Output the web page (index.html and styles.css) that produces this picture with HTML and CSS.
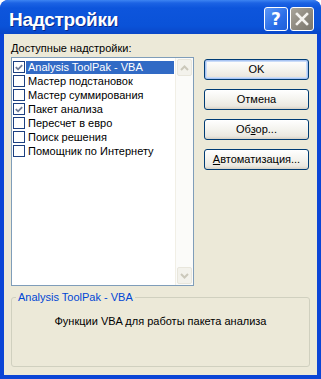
FILE: index.html
```html
<!DOCTYPE html>
<html lang="ru">
<head>
<meta charset="utf-8">
<title>Надстройки</title>
<link rel="stylesheet" href="styles.css">
</head>
<body>
<div class="window">
  <div class="titlebar">
    <span class="title">Надстройки</span>
    <div class="tb-buttons">
      <span class="tb-btn help">?</span>
      <span class="tb-btn close">
        <svg width="14" height="14" viewBox="0 0 14 14"><path d="M2 2 L12 12 M12 2 L2 12" stroke="#f4f2ee" stroke-width="2.6" stroke-linecap="square"/></svg>
      </span>
    </div>
  </div>
  <div class="content">
    <div class="label"><u>Д</u>оступные надстройки:</div>
    <div class="main">
      <div class="list">
        <ul class="items">
          <li class="item"><span class="cb"><svg width="11" height="11" viewBox="0 0 11 11"><path d="M2 5 L4.5 7.5 L9 3" fill="none" stroke="#6d7a96" stroke-width="2"/></svg></span><span class="txt sel">Analysis ToolPak - VBA</span></li>
          <li class="item"><span class="cb"></span><span class="txt">Мастер подстановок</span></li>
          <li class="item"><span class="cb"></span><span class="txt">Мастер суммирования</span></li>
          <li class="item"><span class="cb"><svg width="11" height="11" viewBox="0 0 11 11"><path d="M2 5 L4.5 7.5 L9 3" fill="none" stroke="#6d7a96" stroke-width="2"/></svg></span><span class="txt">Пакет анализа</span></li>
          <li class="item"><span class="cb"></span><span class="txt">Пересчет в евро</span></li>
          <li class="item"><span class="cb"></span><span class="txt">Поиск решения</span></li>
          <li class="item"><span class="cb"></span><span class="txt">Помощник по Интернету</span></li>
        </ul>
        <div class="scrollbar">
          <div class="arrow"><svg width="9" height="6" viewBox="0 0 9 6"><path d="M1 5 L4.5 1.5 L8 5" fill="none" stroke="#cbc8bb" stroke-width="2"/></svg></div>
          <div class="track"></div>
          <div class="arrow"><svg width="9" height="6" viewBox="0 0 9 6"><path d="M1 1 L4.5 4.5 L8 1" fill="none" stroke="#cbc8bb" stroke-width="2"/></svg></div>
        </div>
      </div>
      <div class="buttons">
        <button class="btn default">OK</button>
        <button class="btn">Отмена</button>
        <button class="btn">Об<u>з</u>ор...</button>
        <button class="btn"><u>А</u>втоматизация...</button>
      </div>
    </div>
    <fieldset class="group">
      <legend class="group-title">Analysis ToolPak - VBA</legend>
      <p class="desc">Функции VBA для работы пакета анализа</p>
    </fieldset>
  </div>
</div>
</body>
</html>
```

FILE: styles.css
```css
html, body {
  margin: 0;
  padding: 0;
  background: #ffffff;
}

.window {
  width: 321px;
  height: 379px;
  box-sizing: border-box;
  background: #0b45d6;
  border-radius: 8px 8px 0 0;
  display: flex;
  flex-direction: column;
  font-family: "Liberation Sans", Arial, sans-serif;
  font-size: 11px;
  color: #000;
  overflow: hidden;
}

.titlebar {
  height: 34px;
  flex: none;
  display: flex;
  justify-content: space-between;
  align-items: flex-start;
  padding: 0 7px 0 9px;
  background: linear-gradient(#3d84f2 0px, #1c63e4 3px, #0d55dc 8px, #0a52d8 26px, #0a47c8 34px);
  border-radius: 8px 8px 0 0;
}

.title {
  margin-top: 9px;
  font-size: 19px;
  line-height: 22px;
  font-weight: bold;
  color: #ffffff;
  letter-spacing: -0.3px;
  text-shadow: 1px 1px 0 #0a2a8c;
}

.tb-buttons {
  margin-top: 7px;
  display: flex;
  gap: 2px;
}

.tb-btn {
  width: 24px;
  height: 24px;
  box-sizing: border-box;
  border: 1px solid #ffffff;
  border-radius: 3px;
  display: flex;
  align-items: center;
  justify-content: center;
}

.help {
  background: linear-gradient(135deg, #5d98f7, #2a6ee8 60%, #1f5fd8);
  color: #ffffff;
  font-family: "DejaVu Sans", sans-serif;
  font-weight: bold;
  font-size: 17px;
  line-height: 1;
}

.close {
  background: linear-gradient(135deg, #aaa59a, #8b867c 60%, #7b776e);
}

.content {
  flex: 1;
  margin: 0 4px 4px;
  background: #ece9d8;
  display: flex;
  flex-direction: column;
  padding: 8px 8px 0 7px;
}

.label {
  line-height: 13px;
  height: 13px;
}

.main {
  display: flex;
  gap: 10px;
  margin-top: 2px;
}

.list {
  width: 183px;
  height: 229px;
  box-sizing: border-box;
  border: 1px solid #7f9db9;
  background: #ffffff;
  display: flex;
}

.items {
  flex: 1;
  list-style: none;
  margin: 0;
  padding: 2px 0 0;
}

.item {
  height: 14px;
  display: flex;
  align-items: center;
}

.cb {
  width: 12px;
  height: 12px;
  box-sizing: border-box;
  border: 1px solid #1c3f80;
  background: #ffffff;
  margin-left: 1px;
  margin-right: 1px;
  display: flex;
  align-items: center;
  justify-content: center;
}

.txt {
  flex: 1;
  height: 13px;
  line-height: 13px;
  padding-left: 2px;
  margin-right: 1px;
  white-space: nowrap;
}

.txt.sel {
  background: #316ac5;
  color: #ffffff;
}

.scrollbar {
  width: 17px;
  display: flex;
  flex-direction: column;
  background: #fbfbf9;
  border-left: 1px solid #f1efe6;
}

.arrow {
  height: 17px;
  margin: 1px;
  box-sizing: border-box;
  border: 1px solid #e8e6dc;
  border-radius: 2px;
  background: #f3f2ec;
  display: flex;
  align-items: center;
  justify-content: center;
}

.track {
  flex: 1;
}

.buttons {
  margin-top: 2px;
  width: 105px;
  display: flex;
  flex-direction: column;
  gap: 9px;
}

.btn {
  height: 21px;
  padding: 0;
  border: 1px solid #003c74;
  border-radius: 3px;
  background: linear-gradient(#ffffff, #f4f3ee 50%, #ebe8e0 85%, #d6d0c5);
  font-family: "Liberation Sans", Arial, sans-serif;
  font-size: 11px;
  color: #000;
  line-height: 19px;
}

.btn.default {
  box-shadow: inset 0 0 0 1px #a9c4f2, inset 0 0 0 2px #cadcf8;
}

.group {
  margin: 5px 0 0;
  width: 299px;
  height: 76px;
  box-sizing: border-box;
  border: 1px solid #d0d0bf;
  border-radius: 3px;
  padding: 0;
}

.group-title {
  margin-left: 4px;
  padding: 0 2px;
  color: #0046d5;
  line-height: 13px;
}

.desc {
  margin: 11px 0 0;
  text-align: center;
  line-height: 13px;
}
```
